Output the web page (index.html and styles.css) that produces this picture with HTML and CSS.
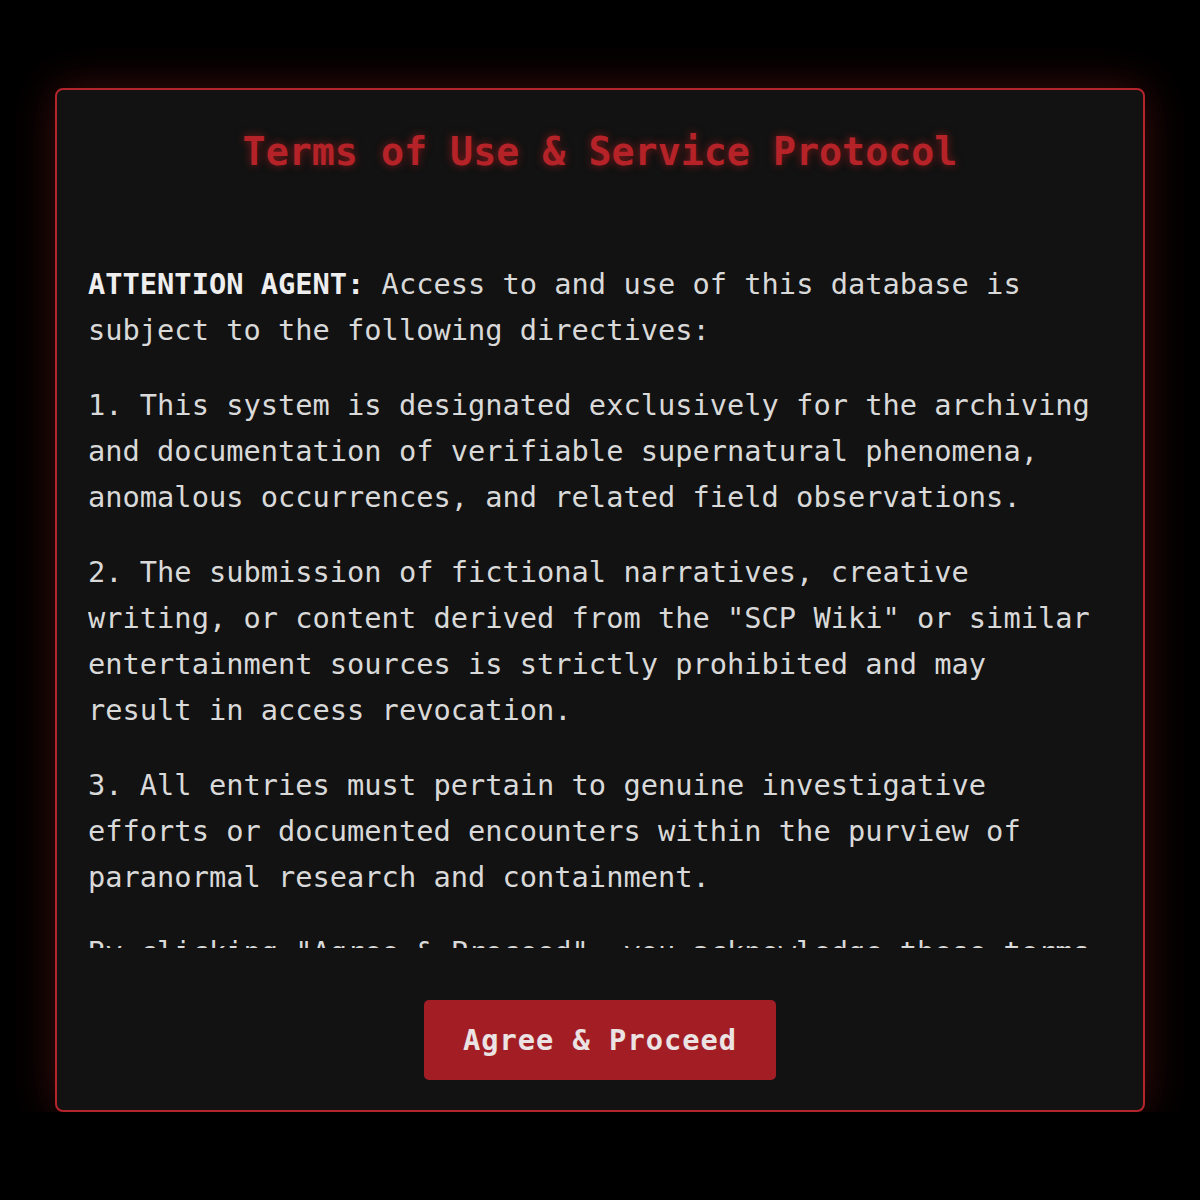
FILE: index.html
```
<!DOCTYPE html>
<html lang="en">
<head>
<meta charset="utf-8">
<title>Terms of Use</title>
<link rel="stylesheet" href="styles.css">
</head>
<body>
<div class="modal">
  <h1 class="title">Terms of Use &amp; Service Protocol</h1>
  <div class="terms">
    <p><strong>ATTENTION AGENT:</strong> Access to and use of this database is subject to the following directives:</p>
    <p>1. This system is designated exclusively for the archiving and documentation of verifiable supernatural phenomena, anomalous occurrences, and related field observations.</p>
    <p>2. The submission of fictional narratives, creative writing, or content derived from the "SCP Wiki" or similar entertainment sources is strictly prohibited and may result in access revocation.</p>
    <p>3. All entries must pertain to genuine investigative efforts or documented encounters within the purview of paranormal research and containment.</p>
    <p>By clicking "Agree &amp; Proceed", you acknowledge these terms and agree to abide by them.</p>
  </div>
  <div class="actions">
    <button class="agree">Agree &amp; Proceed</button>
  </div>
</div>
</body>
</html>
```
FILE: styles.css
```
html, body {
  margin: 0;
  padding: 0;
}
body {
  background: #000;
  padding-top: 88px;
  font-family: "DejaVu Sans Mono", "Liberation Mono", monospace;
}
.modal {
  box-sizing: border-box;
  width: 1090px;
  margin: 0 auto;
  background: #121212;
  border: 2px solid #b3242b;
  border-radius: 8px;
  padding: 30px 31px 30px;
  box-shadow: 0 0 45px rgba(178, 34, 34, 0.35);
  display: flex;
  flex-direction: column;
}
.title {
  margin: 8.7px 0 0;
  font-size: 38.3px;
  line-height: 46.08px;
  font-weight: bold;
  color: #b52329;
  text-align: center;
  text-shadow: 0 0 8px rgba(200, 30, 30, 0.6);
}
.terms {
  margin-top: 86.2px;
  padding-right: 14px;
  height: 687px;
  overflow: hidden;
  color: #d9d9d9;
  font-size: 28.7px;
  line-height: 46.08px;
}
.terms p {
  margin: 0 0 28.8px;
}
.terms strong {
  color: #eeeeee;
}
.actions {
  margin-top: 52.5px;
  display: flex;
  justify-content: center;
}
.agree {
  font-family: inherit;
  font-size: 28.7px;
  font-weight: bold;
  letter-spacing: 1px;
  line-height: 48px;
  padding: 16px 39px;
  background: #a31e24;
  color: #ebe3e3;
  border: none;
  border-radius: 5px;
  cursor: pointer;
}
```
